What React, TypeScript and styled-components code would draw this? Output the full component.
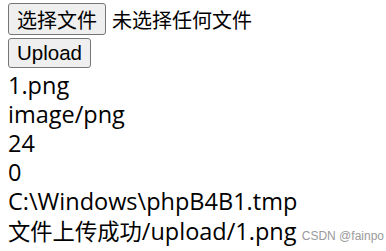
import React from "react";
import styled, { createGlobalStyle } from "styled-components";

const Global = createGlobalStyle`
  html, body { margin: 0; padding: 0; background: #fff; }
  body { font-family: "Open Sans", "Noto Sans CJK SC", sans-serif; color: #000; }
`;

const Page = styled.div`
  padding: 3px 8px 0 8px;
  display: flex;
  flex-direction: column;
  position: relative;
  width: 370px;
  height: 248px;
`;

const FormRow = styled.div`
  display: flex;
  align-items: center;
  gap: 6px;
  height: 32px;
`;

const Button = styled.button<{ $w: number }>`
  box-sizing: border-box;
  width: ${(p) => p.$w}px;
  height: ${(p) => (p.$w > 90 ? 32 : 30)}px;
  margin: 0;
  padding: 0;
  background: #efefef;
  border: 1px solid #767676;
  border-radius: 3px;
  font-family: "Noto Sans CJK SC", "Open Sans", sans-serif;
  font-size: 20px;
  color: #000;
  display: flex;
  align-items: center;
  justify-content: center;
`;

const UploadButton = styled(Button)`
  font-family: "Liberation Sans", Arial, sans-serif;
  font-size: 20.5px;
  margin-top: 3px;
`;

const FileLabel = styled.span`
  font-family: "Noto Sans CJK SC", sans-serif;
  font-size: 20px;
`;

const Output = styled.div`
  margin-top: 3px;
  font-size: 23.5px;
  line-height: 29px;
`;

const Line = styled.div`
  white-space: nowrap;
`;

const Cjk = styled.span`
  font-family: "Noto Sans CJK SC", sans-serif;
  font-size: 22.3px;
`;

const Watermark = styled.span`
  position: absolute;
  right: 2px;
  bottom: 8px;
  font-family: "Liberation Sans", Arial, sans-serif;
  font-size: 12px;
  color: #9a9a9a;
`;

export default function App() {
  return (
    <>
      <Global />
      <Page>
        <FormRow>
          <Button $w={98}>选择文件</Button>
          <FileLabel>未选择任何文件</FileLabel>
        </FormRow>
        <UploadButton $w={83}>Upload</UploadButton>
        <Output>
          <Line>1.png</Line>
          <Line>image/png</Line>
          <Line>24</Line>
          <Line>0</Line>
          <Line>C:\Windows\phpB4B1.tmp</Line>
          <Line>
            <Cjk>文件上传成功</Cjk>/upload/1.png
          </Line>
        </Output>
        <Watermark>CSDN @fainpo</Watermark>
      </Page>
    </>
  );
}
